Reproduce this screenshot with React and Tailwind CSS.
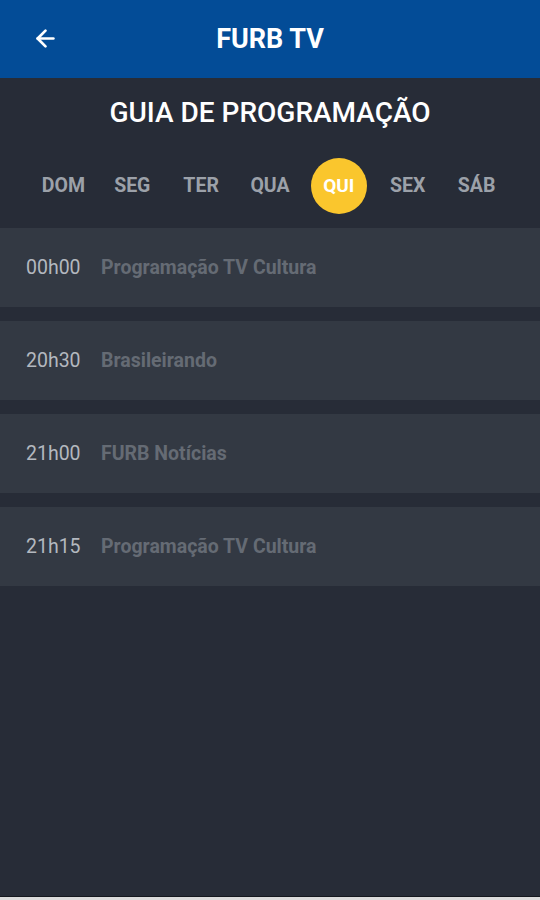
import { ArrowLeft } from 'lucide-react';

const DAYS = ['DOM', 'SEG', 'TER', 'QUA', 'QUI', 'SEX', 'SÁB'];

const SCHEDULE = [
  { time: '00h00', title: 'Programação TV Cultura' },
  { time: '20h30', title: 'Brasileirando' },
  { time: '21h00', title: 'FURB Notícias' },
  { time: '21h15', title: 'Programação TV Cultura' },
];

export default function App() {
  const active = 'QUI';

  return (
    <div className="w-[540px] h-[900px] flex flex-col bg-[#272c37] font-['Roboto',sans-serif] overflow-hidden">
      <header className="h-[78px] shrink-0 bg-[#034c97] flex items-center relative">
        <button className="absolute left-[32px] top-[25px] text-white">
          <ArrowLeft className="w-[27px] h-[27px]" strokeWidth={2.4} />
        </button>
        <h1 className="w-full text-center text-white text-[27px] font-bold">FURB TV</h1>
      </header>

      <div className="flex-1 flex flex-col">
        <h2 className="text-center text-white text-[28px] font-medium mt-[19px] leading-[32px]">
          GUIA DE PROGRAMAÇÃO
        </h2>

        <div className="grid grid-cols-7 px-[29px] mt-[29px] h-[56px] items-center">
          {DAYS.map((d) => (
            <div key={d} className="flex justify-center">
              {d === active ? (
                <span className="w-[56px] h-[56px] rounded-full bg-[#fac62d] flex items-center justify-center text-white text-[19px] font-bold">
                  {d}
                </span>
              ) : (
                <span className="text-[#9ca1a9] text-[19.5px] font-bold">{d}</span>
              )}
            </div>
          ))}
        </div>

        <div className="flex flex-col gap-[14px] mt-[14px]">
          {SCHEDULE.map((item, i) => (
            <div key={i} className="h-[79px] bg-[#333943] flex items-center pl-[26px]">
              <span className="text-[#b3b8bf] text-[19.5px] w-[75px]">{item.time}</span>
              <span className="text-[#656b74] text-[19.5px] font-bold">{item.title}</span>
            </div>
          ))}
        </div>
      </div>

      <div className="h-[1px] bg-[#15181e]" />
      <div className="h-[3px] bg-[#dcdcdc]" />
    </div>
  );
}
